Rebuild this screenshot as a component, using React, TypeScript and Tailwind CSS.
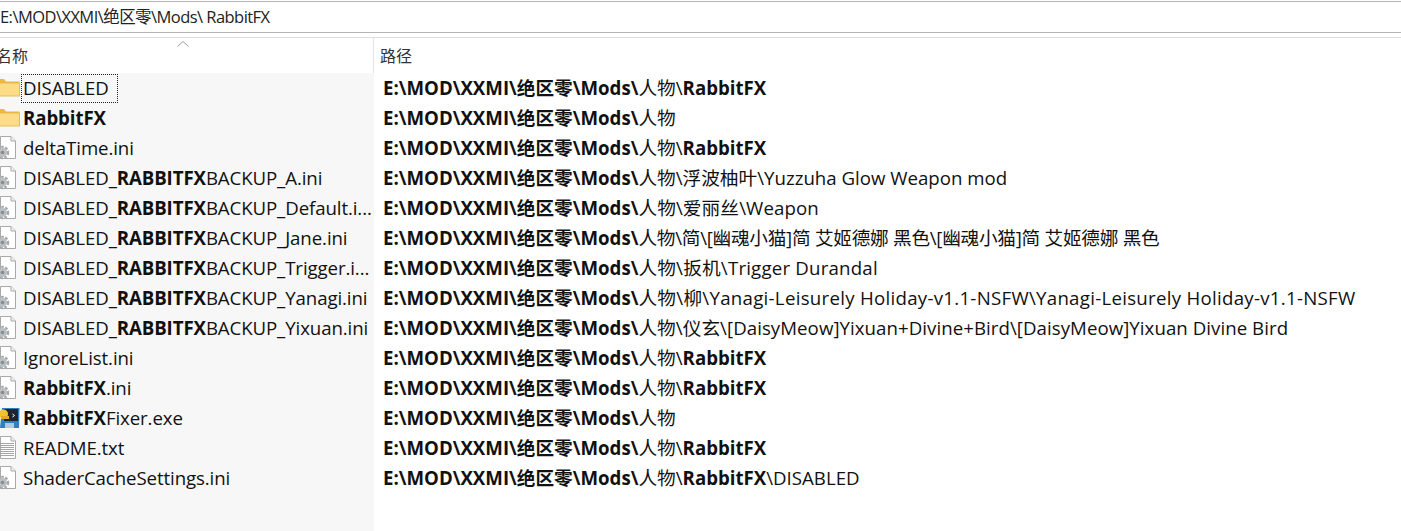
import React from "react";

type Part = { t: string; b?: boolean; c?: string };

const ROOT = "E:\\MOD\\XXMI\\绝区零\\Mods\\";
const FX = "RabbitFX";

const rows: { icon: "folder" | "ini" | "exe" | "txt"; name: Part[]; path: Part[]; focus?: boolean }[] = [
  { icon: "folder", focus: true, name: [{ t: "DISABLED" }], path: [{ t: ROOT, b: true }, { t: "人物\\" }, { t: FX, b: true }] },
  { icon: "folder", name: [{ t: FX, b: true }], path: [{ t: ROOT, b: true }, { t: "人物" }] },
  { icon: "ini", name: [{ t: "deltaTime.ini" }], path: [{ t: ROOT, b: true }, { t: "人物\\" }, { t: FX, b: true }] },
  { icon: "ini", name: [{ t: "DISABLED_" }, { t: "RABBITFX", b: true }, { t: "BACKUP_A.ini" }], path: [{ t: ROOT, b: true }, { t: "人物\\浮波柚叶\\Yuzzuha Glow Weapon mod" }] },
  { icon: "ini", name: [{ t: "DISABLED_" }, { t: "RABBITFX", b: true }, { t: "BACKUP_Default.i..." }], path: [{ t: ROOT, b: true }, { t: "人物\\爱丽丝\\Weapon", c: "tracking-[0.1px]" }] },
  { icon: "ini", name: [{ t: "DISABLED_" }, { t: "RABBITFX", b: true }, { t: "BACKUP_Jane.ini" }], path: [{ t: ROOT, b: true }, { t: "人物\\简\\[幽魂小猫]简 艾姬德娜 黑色\\[幽魂小猫]简 艾姬德娜 黑色", c: "tracking-[-0.27px]" }] },
  { icon: "ini", name: [{ t: "DISABLED_" }, { t: "RABBITFX", b: true }, { t: "BACKUP_Trigger.i..." }], path: [{ t: ROOT, b: true }, { t: "人物\\扳机\\Trigger Durandal", c: "tracking-[0.2px]" }] },
  { icon: "ini", name: [{ t: "DISABLED_" }, { t: "RABBITFX", b: true }, { t: "BACKUP_Yanagi.ini" }], path: [{ t: ROOT, b: true }, { t: "人物\\柳\\Yanagi-Leisurely Holiday-v1.1-NSFW\\Yanagi-Leisurely Holiday-v1.1-NSFW", c: "tracking-[0.28px]" }] },
  { icon: "ini", name: [{ t: "DISABLED_" }, { t: "RABBITFX", b: true }, { t: "BACKUP_Yixuan.ini" }], path: [{ t: ROOT, b: true }, { t: "人物\\仪玄\\[DaisyMeow]Yixuan+Divine+Bird\\[DaisyMeow]Yixuan Divine Bird", c: "tracking-[0.05px]" }] },
  { icon: "ini", name: [{ t: "IgnoreList.ini" }], path: [{ t: ROOT, b: true }, { t: "人物\\" }, { t: FX, b: true }] },
  { icon: "ini", name: [{ t: FX, b: true }, { t: ".ini" }], path: [{ t: ROOT, b: true }, { t: "人物\\" }, { t: FX, b: true }] },
  { icon: "exe", name: [{ t: FX, b: true }, { t: "Fixer.exe" }], path: [{ t: ROOT, b: true }, { t: "人物" }] },
  { icon: "txt", name: [{ t: "README.txt" }], path: [{ t: ROOT, b: true }, { t: "人物\\" }, { t: FX, b: true }] },
  { icon: "ini", name: [{ t: "ShaderCacheSettings.ini" }], path: [{ t: ROOT, b: true }, { t: "人物\\" }, { t: FX, b: true }, { t: "\\DISABLED" }] },
];

function FolderIcon() {
  return (
    <svg width="20" height="20" viewBox="0 0 20 20">
      <path d="M-2 1h6l2 2.500h13.500V18H-2z" fill="#eeb93f" />
      <path d="M-2 5h21.500v13H-2z" fill="#fcdc86" stroke="#e3b34a" strokeWidth="0.8" />
    </svg>
  );
}

function IniIcon() {
  return (
    <svg width="20" height="24" viewBox="0 0 20 24">
      <path d="M0.500 0.500h10.500l4.500 4.500v17.500h-15z" fill="#fff" stroke="#a9a9a9" />
      <path d="M11 0.500v4.500h4.500" fill="#f0f0f0" stroke="#a9a9a9" />
      <circle cx="2.500" cy="16.500" r="5.500" fill="none" stroke="#a3a9ad" strokeWidth="2.500" strokeDasharray="2.500 1.500" />
      <circle cx="2.500" cy="16.500" r="4.500" fill="#b9bfc2" />
      <circle cx="2.500" cy="16.500" r="1.800" fill="#868d91" />
    </svg>
  );
}

function TxtIcon() {
  return (
    <svg width="20" height="24" viewBox="0 0 20 24">
      <path d="M0.500 0.500h10.500l4.500 4.500v17.500h-15z" fill="#fff" stroke="#a9a9a9" />
      <path d="M11 0.500v4.500h4.500" fill="#f0f0f0" stroke="#a9a9a9" />
      <path d="M0 7.500h14M0 9.500h14M0 11.500h14M0 13.500h14M0 15.500h14M0 17.500h14M0 19.500h14" stroke="#a5a5a5" />
    </svg>
  );
}

function ExeIcon() {
  return (
    <svg width="20" height="24" viewBox="0 0 20 24">
      <path d="M2 2h17.500l-0.500 20H0z" fill="#2f7fc1" />
      <rect x="4" y="3" width="14" height="12" fill="#1d2530" />
      <path d="M12.500 8l2 1.500-2 1.500" fill="none" stroke="#fff" strokeWidth="1" />
      <rect x="5" y="17" width="9" height="5" fill="#a9cbe4" />
      <circle cx="3.500" cy="8" r="4.500" fill="#f2c230" />
      <path d="M1 10h8v3H1z" fill="#e8a820" />
    </svg>
  );
}

function FileIcon({ kind }: { kind: string }) {
  if (kind === "folder") return <FolderIcon />;
  if (kind === "exe") return <ExeIcon />;
  if (kind === "txt") return <TxtIcon />;
  return <IniIcon />;
}

function Text({ parts }: { parts: Part[] }) {
  return (
    <>
      {parts.map((p, i) => (
        <span key={i} className={`${p.b ? "font-bold" : "font-normal"} ${p.c ?? ""}`}>
          {p.t}
        </span>
      ))}
    </>
  );
}

export default function App() {
  return (
    <div className="w-[1401px] h-[531px] overflow-hidden bg-white text-[18.67px] text-[#111] font-['Open_Sans','Noto_Sans_CJK_SC',sans-serif] whitespace-pre">
      <div className="h-[32px] mt-px border-y border-[#b5b5b5] flex items-center text-[16.5px] tracking-[-0.55px] text-[#222]">
        E:\MOD\XXMI\绝区零\Mods\ RabbitFX
      </div>
      <div className="h-[36px] mt-[4px] border-t border-[#dedede] flex relative text-[16px] text-[#333]">
        <div className="w-[374px] border-r border-[#e5e5e5] flex items-center">
          <span className="-ml-[4px]">名称</span>
        </div>
        <div className="pl-[6px] flex items-center">路径</div>
        <svg className="absolute left-[176px] top-[2px]" width="14" height="8" viewBox="0 0 14 8">
          <path d="M1.500 6.500L7 1.500l5.500 5" fill="none" stroke="#9a9a9a" />
        </svg>
      </div>
      <div className="flex h-[458px]">
        <div className="w-[374px] bg-[#f7f7f7] shrink-0">
          {rows.map((r, i) => (
            <div key={i} className="h-[30px] flex items-center overflow-hidden tracking-[-0.1px]">
              <div className="w-[20px] shrink-0 flex items-center justify-start">
                <FileIcon kind={r.icon} />
              </div>
              <div className={r.focus ? "ml-[1px] px-[2px] h-[29px] flex items-center outline-1 outline-dotted -outline-offset-1 outline-[#222] w-[97px]" : "ml-[3px]"}>
                <Text parts={r.name} />
              </div>
            </div>
          ))}
        </div>
        <div className="pl-[9px]">
          {rows.map((r, i) => (
            <div key={i} className="h-[30px] flex items-center">
              <span>
                <Text parts={r.path} />
              </span>
            </div>
          ))}
        </div>
      </div>
    </div>
  );
}
